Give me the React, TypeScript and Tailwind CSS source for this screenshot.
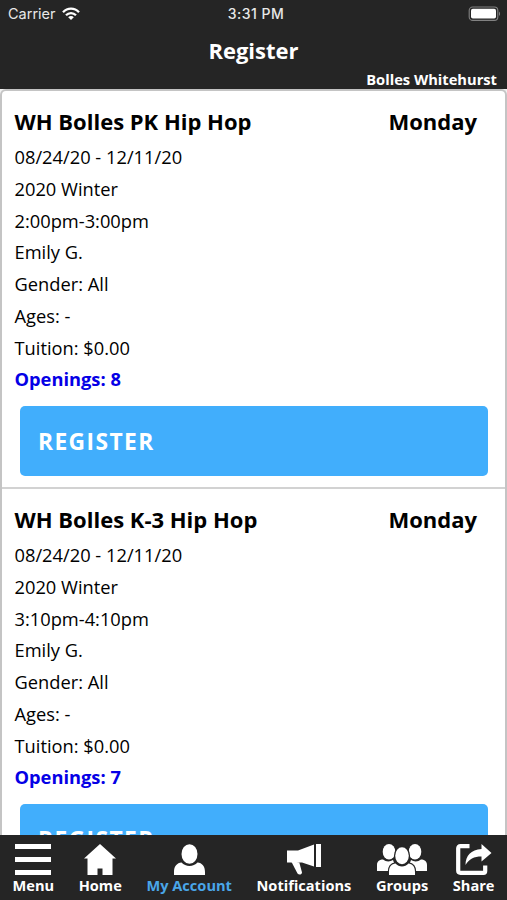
import type { ReactNode } from 'react'

type ClassInfo = {
  name: string
  day: string
  details: string[]
  openings: number
}

const classes: ClassInfo[] = [
  {
    name: 'WH Bolles PK Hip Hop',
    day: 'Monday',
    details: ['08/24/20 - 12/11/20', '2020 Winter', '2:00pm-3:00pm', 'Emily G.', 'Gender: All', 'Ages: -', 'Tuition: $0.00'],
    openings: 8,
  },
  {
    name: 'WH Bolles K-3 Hip Hop',
    day: 'Monday',
    details: ['08/24/20 - 12/11/20', '2020 Winter', '3:10pm-4:10pm', 'Emily G.', 'Gender: All', 'Ages: -', 'Tuition: $0.00'],
    openings: 7,
  },
]

const StatusBar = () => {
  return (
    <div className="grid h-7 grid-cols-3 items-center pl-[8px] pr-[6px] font-['Inter',sans-serif] text-[#e8e8e8]">
      <div className="flex items-center gap-[6px]">
        <span className="text-[14.5px]">Carrier</span>
        <svg width="18" height="14" viewBox="0 0 18 14" fill="none" stroke="white" strokeWidth="2.3">
          <path d="M1 5.2C5.5 .4 12.5 .4 17 5.2" />
          <path d="M4 8.3C6.8 5.4 11.2 5.4 14 8.3" />
          <path d="M6.2 10.2C7.8 8.7 10.2 8.7 11.8 10.2L9 13Z" fill="white" stroke="none" />
        </svg>
      </div>
      <span className="pb-px pl-[3px] text-center text-[14px] font-medium tracking-[0.5px]">3:31 PM</span>
      <svg className="mb-px justify-self-end" width="33" height="16" viewBox="0 0 33 16">
        <rect x="1.2" y="1" width="28.6" height="13.4" rx="3.5" fill="none" stroke="#828282" strokeWidth="1.1" />
        <rect x="3" y="2.8" width="25" height="9.8" rx="1.8" fill="white" />
        <path d="M31 5.5c1.4.8 1.4 3.6 0 4.4Z" fill="#828282" />
      </svg>
    </div>
  )
}

const Header = () => {
  return (
    <header className="h-[89px] shrink-0 bg-[#252525] text-white">
      <StatusBar />
      <h1 className="h-[42px] text-center text-[22px] font-bold leading-[44px]">Register</h1>
      <p className="pr-[10px] text-right text-[14.7px] font-bold leading-[18px]">Bolles Whitehurst</p>
    </header>
  )
}

const ClassCard = ({ name, day, details, openings }: ClassInfo) => {
  return (
    <section className="h-[398px] shrink-0 border-b-2 border-[#d2d2d2] pl-[12.5px] pr-[17px] pt-[12px]">
      <div className="flex h-[38px] items-start justify-between pr-[11px] text-[22px] font-bold leading-[36px]">
        <h2>{name}</h2>
        <span>{day}</span>
      </div>
      <div className="text-[18.3px] leading-[31.75px]">
        {details.map((line) => (
          <p key={line}>{line}</p>
        ))}
        <p className="font-bold text-[#0500e6]">Openings: {openings}</p>
      </div>
      <button className="ml-[5.5px] mt-[11px] block h-[70px] w-[468px] rounded-[5px] bg-[#41aefc] pl-[18px] pt-[2px] text-left text-[22.8px] font-bold tracking-[1.4px] text-white">
        REGISTER
      </button>
    </section>
  )
}

const NavItem = ({ label, active, children }: { label: string; active?: boolean; children: ReactNode }) => {
  return (
    <a href="#" className="flex flex-col items-center">
      <span className="flex h-[31px] items-start">{children}</span>
      <span className={active ? 'text-[14.6px] font-bold leading-5 text-[#4aa6e8]' : 'text-[14.6px] font-bold leading-5 text-white'}>
        {label}
      </span>
    </a>
  )
}

const BottomNav = () => {
  return (
    <nav className="flex h-[65px] shrink-0 justify-between bg-[#252525] px-[12.5px] pt-[9px]">
      <NavItem label="Menu">
        <svg width="36" height="32" viewBox="0 0 36 32" fill="white">
          <path d="M0 0h36v5H0zM0 13h36v5H0zM0 26h36v5H0z" />
        </svg>
      </NavItem>
      <NavItem label="Home">
        <svg width="32" height="32" viewBox="0 0 32 32" fill="white">
          <path d="M16 0L32 14.5H28.5V31H18.5V24.5H13.5V31H3.5V14.5H0Z" />
        </svg>
      </NavItem>
      <NavItem label="My Account" active>
        <svg width="31" height="32" viewBox="0 0 31 32" fill="white">
          <ellipse cx="15.5" cy="10" rx="8" ry="9.8" />
          <path d="M0 31V28C0 22 3 19 7.5 18.5C11.5 23 19.5 23 23.5 18.5C28 19 31 22 31 28V31Z" />
        </svg>
      </NavItem>
      <NavItem label="Notifications">
        <svg width="34" height="32" viewBox="0 0 34 32" fill="white">
          <path d="M0 6.5H11L27 .5V22.5L15 18.5H0Z" />
          <path d="M4 17L12.3 18.5L15 28.5C15 30.5 12 31.5 10.5 29.5Z" />
          <path d="M29 0H34V23H29Z" />
        </svg>
      </NavItem>
      <NavItem label="Groups">
        <svg width="50" height="32" viewBox="0 0 50 32" fill="white">
          <ellipse cx="12" cy="7.8" rx="6.3" ry="7.8" />
          <ellipse cx="38" cy="7.8" rx="6.3" ry="7.8" />
          <path d="M0 27V21C0 17 3 15.5 6 15.5C9 18 13 18 16 16L20 27Z" />
          <path d="M50 27V21C50 17 47 15.5 44 15.5C41 18 37 18 34 16L30 27Z" />
          <g stroke="#252525" strokeWidth="2.5" paintOrder="stroke">
            <path d="M12 31V28C12 22 15 20 18.5 19.5C22 23.5 28 23.5 31.5 19.5C35 20 38 22 38 28V31Z" />
            <ellipse cx="25" cy="11.7" rx="6.8" ry="8.5" />
          </g>
        </svg>
      </NavItem>
      <NavItem label="Share">
        <svg width="36" height="32" viewBox="0 0 36 32">
          <path d="M13.5 2.2H4.5Q2.2 2.2 2.2 4.5V26.5Q2.2 28.8 4.5 28.8H27.5Q29.2 28.8 29.2 27V21.5" fill="none" stroke="white" strokeWidth="4.2" />
          <path d="M25.5 0L35.5 9L25.5 17.5V12.5C18 12.5 13 15 9.5 21C9.5 12 15 5.5 25.5 5Z" fill="white" />
        </svg>
      </NavItem>
    </nav>
  )
}

export default function App() {
  return (
    <div className="flex h-[900px] w-[507px] flex-col overflow-hidden bg-[#252525] font-['Open_Sans',sans-serif] text-black">
      <Header />
      <main className="min-h-0 flex-1 overflow-hidden bg-[#f0f0f0]">
        <div className="h-[800px] rounded-t-[6px] border-x-2 border-t-2 border-[#c4c4c4] bg-white">
          {classes.map((item) => (
            <ClassCard key={item.name} {...item} />
          ))}
        </div>
      </main>
      <BottomNav />
    </div>
  )
}
